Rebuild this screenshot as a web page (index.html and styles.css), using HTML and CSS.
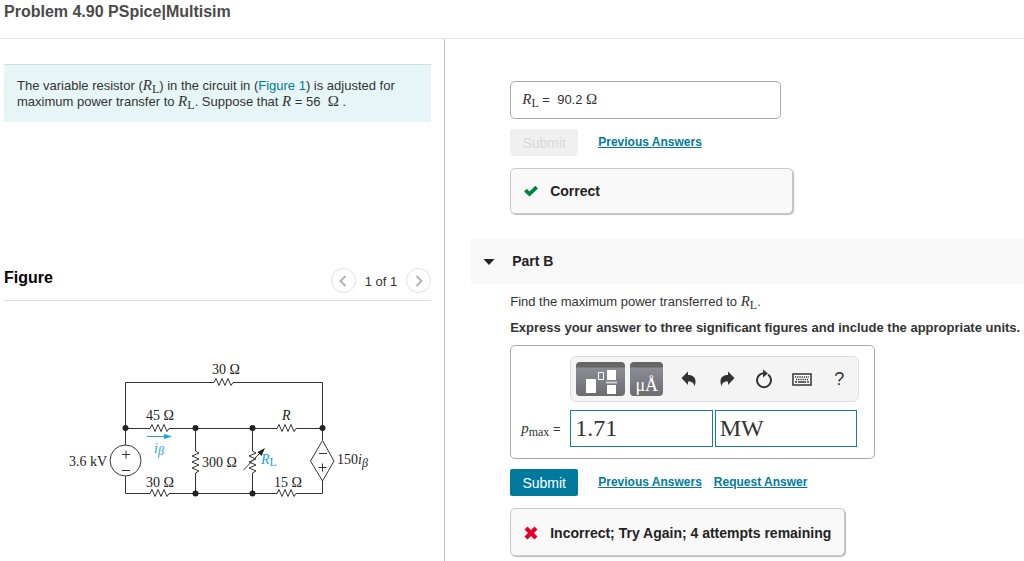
FILE: index.html
```html
<!DOCTYPE html>
<html lang="en">
<head>
  <meta charset="UTF-8">
  <meta name="viewport" content="width=device-width, initial-scale=1.0">
  <title>Problem 4.90 PSpice|Multisim</title>
  <link rel="stylesheet" href="styles.css">
</head>
<body>

  <header class="page-header">
    <h1 class="page-title">Problem 4.90 PSpice|Multisim</h1>
  </header>

  <main class="columns">
    <section class="problem">
      <p class="intro">The variable resistor (<span class="math"><i>R</i><sub>L</sub></span>) in the circuit in (<a href="#figure" class="figure-link">Figure 1</a>) is adjusted for maximum power transfer to <span class="math"><i>R</i><sub>L</sub></span>. Suppose that <span class="math"><i>R</i></span> = 56 &nbsp;<span class="math">Ω</span> .</p>

      <div class="figure-header" id="figure">
        <h2 class="figure-title">Figure</h2>
        <div class="pager">
          <button class="pager-button" aria-label="Previous figure">
            <svg width="8" height="12" viewBox="0 0 8 12"><path d="M6.500 1L1.500 6l5 5"/></svg>
          </button>
          <span class="pager-text">1 of 1</span>
          <button class="pager-button" aria-label="Next figure">
            <svg width="8" height="12" viewBox="0 0 8 12"><path d="M1.500 1l5 5-5 5"/></svg>
          </button>
        </div>
      </div>

      <svg class="circuit" width="310" height="140" viewBox="65 360 310 140">
        <!-- wires -->
        <g class="wire">
          <path d="M125.500 445V382.500H214l2 -4 3 7 3 -7 3 7 3 -7 3 7 2 -3H322.500V440"/>
          <path d="M125.500 428.500H150l2 -4 3 7 3 -7 3 7 3 -7 3 7 2 -3H277l2 -4 3 7 3 -7 3 7 3 -7 3 7 2 -3H322"/>
          <path d="M125.500 476V493.500H150l2 -4 3 7 3 -7 3 7 3 -7 3 7 2 -3H277l2 -4 3 7 3 -7 3 7 3 -7 3 7 2 -3H322.500V481"/>
          <path d="M195.500 428V451l3.500 2 -7 3 7 3 -7 3 7 3 -7 3 7 3 -3.500 2V494"/>
          <path d="M252.500 428V451l3.500 2 -7 3 7 3 -7 3 7 3 -7 3 7 3 -3.500 2V494"/>
          <circle cx="125.500" cy="460.500" r="15.500"/>
          <path d="M322.500 440.500L334 461l-11.500 20L310.500 461z"/>
          <path d="M122 454.500h8M126 450.500v8M122 470.500h8M319 453.500h8M318.500 467.500h8M322.500 463.500v8"/>
          <path d="M243.500 470L260 453"/>
        </g>
        <path class="ink" d="M265 448l-3.500 8-4-4z"/>
        <g class="ink">
          <circle cx="125.500" cy="428" r="3"/>
          <circle cx="195.500" cy="428" r="3"/>
          <circle cx="252.500" cy="428" r="3"/>
          <circle cx="322.500" cy="428" r="3"/>
          <circle cx="195.500" cy="493.500" r="3"/>
          <circle cx="252.500" cy="493.500" r="3"/>
        </g>
        <!-- current direction -->
        <path class="current" d="M147 436h17v-2l8 2.500-8 2.500v-2h-17z"/>
        <!-- labels -->
        <g class="label">
          <text x="212" y="374">30 Ω</text>
          <text x="146" y="420">45 Ω</text>
          <text x="146" y="487">30 Ω</text>
          <text x="274" y="487">15 Ω</text>
          <text x="202" y="467">300 Ω</text>
          <text x="69" y="466">3.6 kV</text>
          <text x="282" y="420" class="var">R</text>
          <text x="337" y="464">150<tspan class="var">i</tspan><tspan class="var small" dy="3">β</tspan></text>
          <text x="154" y="453" class="blue var">i<tspan class="small" dy="2">β</tspan></text>
          <text x="261" y="464" class="blue"><tspan class="var">R</tspan><tspan class="small" dy="2">L</tspan></text>
        </g>
      </svg>
    </section>

    <section class="answers">
      <div class="part-body">
        <div class="given-answer"><span class="math"><i>R</i><sub>L</sub></span> = &nbsp;90.2 <span class="math">Ω</span></div>
        <div class="actions">
          <button class="submit-button" disabled>Submit</button>
          <a href="#" class="action-link">Previous Answers</a>
        </div>
        <div class="feedback feedback-correct">
          <svg width="14" height="12" viewBox="0 0 14 12"><path d="M0 6.500L2.800 3.800 5.500 6.500 11.300 0.700 14 3.400 5.500 11.500z" fill="#00843d"/></svg>
          <span>Correct</span>
        </div>
      </div>

      <button class="part-header" aria-expanded="true">
        <svg width="12" height="6" viewBox="0 0 12 6"><path d="M0.500 0h11L6 6z" fill="#222"/></svg>
        <span>Part B</span>
      </button>

      <div class="part-body">
        <p class="question">Find the maximum power transferred to <span class="math"><i>R</i><sub>L</sub></span>.</p>
        <p class="instruction">Express your answer to three significant figures and include the appropriate units.</p>

        <div class="answer-box">
          <div class="toolbar">
            <button class="template-button" aria-label="Templates">
              <svg width="32" height="26" viewBox="0 0 32 26">
                <g fill="#fff">
                  <path d="M1 10h10v14H1zM22 1h9v10h-9zM22 16h9v9h-9z"/>
                  <path d="M21 12.500h11v2H21z" fill="#d2d2d6"/>
                </g>
                <path d="M13.500 3.500h5v7h-5z" fill="none" stroke="#fff"/>
              </svg>
            </button>
            <button class="units-button" aria-label="Symbols">μÅ</button>
            <button class="tool-button" aria-label="Undo">
              <svg width="16" height="16" viewBox="0 0 16 16"><path d="M7 0.500v3.500c5 0 7.500 2.500 7.500 6.500 0 2-.5 3.500-1.500 5 .3-3.500-1.500-5-6-5v3.500L0.500 7z"/></svg>
            </button>
            <button class="tool-button" aria-label="Redo">
              <svg width="16" height="16" viewBox="0 0 16 16"><path d="M9 0.500v3.500c-5 0-7.500 2.500-7.500 6.500 0 2 .5 3.500 1.500 5-.3-3.500 1.500-5 6-5v3.500L15.500 7z"/></svg>
            </button>
            <button class="tool-button" aria-label="Reset">
              <svg width="18" height="20" viewBox="0 0 18 20"><path d="M13.200 5.600A7 7 0 1 1 4.800 5.600M4.800 5.600Q6.500 4.300 9 4.300" fill="none" stroke="#333" stroke-width="2"/><path d="M8 0.500l5 4-5 4z"/></svg>
            </button>
            <button class="tool-button" aria-label="Keyboard">
              <svg width="20" height="13" viewBox="0 0 20 13"><path d="M1 1h18v11H1z" fill="#fff" stroke="#333" stroke-width="1.500"/><path d="M3 4h14M4 6.500h12" fill="none" stroke="#333" stroke-width="1.300" stroke-dasharray="1.300 .9"/><path d="M3 9h2M6 9h8M15 9h2" stroke="#333" stroke-width="1.300"/></svg>
            </button>
            <button class="tool-button help" aria-label="Help">?</button>
          </div>
          <label for="value" class="answer-label"><span class="math"><i>p</i><sub>max</sub></span> =</label>
          <div class="answer-inputs">
            <input type="text" id="value" class="answer-input" value="1.71">
            <input type="text" id="units" class="answer-input" value="MW" aria-label="Units">
          </div>
        </div>

        <div class="actions">
          <button class="submit-button">Submit</button>
          <a href="#" class="action-link">Previous Answers</a>
          <a href="#" class="action-link">Request Answer</a>
        </div>
        <div class="feedback feedback-incorrect">
          <svg width="14" height="14" viewBox="0 0 14 14"><path d="M3.500 0.500L7 4 10.500 0.500 13.500 3.500 10 7 13.500 10.500 10.500 13.500 7 10 3.500 13.500 0.500 10.500 4 7 0.500 3.500z" fill="#e0002a"/></svg>
          <span>Incorrect; Try Again; 4 attempts remaining</span>
        </div>
      </div>
    </section>
  </main>

</body>
</html>
```
FILE: styles.css
```css
* {
  box-sizing: border-box;
}

body {
  margin: 0;
  min-height: 100vh;
  display: flex;
  flex-direction: column;
  background: #fff;
  color: #333;
  font-family: "Liberation Sans", Arial, sans-serif;
  font-size: 13px;
  line-height: 16px;
}

h1, h2, p {
  margin: 0;
}

button, input {
  font-family: inherit;
  cursor: pointer;
}

svg {
  flex: none;
}

.math {
  font-family: "Liberation Serif", "Times New Roman", serif;
  font-size: 15px;
  line-height: 1px;
}

.math sub {
  font-size: 12px;
  line-height: 1px;
  vertical-align: -3px;
}

.page-header {
  padding: 2px 4px 16px;
  border-bottom: 1px solid #e3e3e3;
}

.page-title {
  font-size: 16px;
  line-height: 20px;
  color: #4a4a4a;
}

.columns {
  flex: 1;
  display: grid;
  grid-template-columns: 10fr 13fr;
}

/* left column */
.problem {
  padding: 25px 13px 0 4px;
  border-right: 1px solid #b4c2d3;
}

.intro {
  padding: 13px 13px 12px;
  background: #e6f6f6;
  border-top: 1px solid #d5dcdf;
}

.figure-link {
  color: #007a9c;
  text-decoration: none;
}

.figure-header {
  display: flex;
  justify-content: space-between;
  margin-top: 146px;
  padding-bottom: 7px;
  border-bottom: 1px solid #e0e0e0;
}

.figure-title {
  font-size: 16px;
  line-height: 20px;
  color: #000;
}

.pager {
  display: flex;
  align-items: center;
  gap: 9px;
}

.pager-text {
  font-size: 13px;
  padding-top: 3px;
}

.pager-button {
  width: 25px;
  height: 25px;
  padding: 0;
  display: flex;
  align-items: center;
  justify-content: center;
  background: #fff;
  border: 1px solid #e0e0e0;
  border-radius: 50%;
}

.pager-button path {
  fill: none;
  stroke: #b5b5b5;
  stroke-width: 2;
}

.circuit {
  display: block;
  margin: 59px 0 0 61px;
}

.wire {
  fill: none;
  stroke: #333;
  stroke-width: 1;
}

.ink {
  fill: #222;
}

.current, .label .blue {
  fill: #1ba3dc;
}

.label {
  font-family: "Liberation Serif", "Times New Roman", serif;
  font-size: 14px;
  fill: #222;
}

.label .var {
  font-style: italic;
}

.label .small {
  font-size: 12px;
}

/* right column */
.answers {
  padding: 42px 0 5px 26px;
}

.part-body {
  padding-left: 39px;
}

.given-answer {
  width: 271px;
  padding: 10px 11px;
  border: 1px solid #aaa;
  border-radius: 5px;
}

.actions {
  display: flex;
  align-items: center;
  gap: 12px;
  margin: 10px 0 12px;
}

.submit-button {
  width: 68px;
  height: 27px;
  margin-right: 8px;
  padding: 0;
  font-size: 14px;
  color: #fff;
  background: #007a9c;
  border: none;
  border-radius: 2px;
}

.submit-button:disabled {
  color: #d8d8d8;
  background: #f0f0f0;
}

.action-link {
  font-size: 12px;
  line-height: 14px;
  padding-bottom: 2px;
  font-weight: bold;
  color: #007a9c;
}

.feedback {
  display: flex;
  align-items: center;
  gap: 12px;
  width: fit-content;
  padding: 14px 13px;
  font-size: 14px;
  font-weight: bold;
  color: #222;
  background: #f9f9f9;
  border: 1px solid #c8c8c8;
  border-radius: 5px;
  box-shadow: 1px 1px 1px #bbb;
}

.feedback-correct {
  width: 283px;
}

.feedback-incorrect {
  padding: 16px 13px 14px;
}

.part-header {
  width: 100%;
  margin: 25px 0 10px;
  padding: 14px 12px;
  display: flex;
  align-items: center;
  gap: 17px;
  font-size: 14px;
  line-height: 17px;
  font-weight: bold;
  color: #222;
  background: #f8f8f8;
  border: none;
}

.instruction {
  margin-top: 10px;
  font-weight: bold;
}

.answer-box {
  display: grid;
  grid-template-columns: 49px 1fr;
  row-gap: 8px;
  align-items: center;
  width: 365px;
  margin-top: 9px;
  padding: 10px 15px 11px 10px;
  border: 1px solid #aaa;
  border-radius: 5px;
}

.toolbar {
  grid-column: 2;
  display: flex;
  align-items: center;
  height: 46px;
  padding: 0 0 0 5px;
  background: #f4f4f4;
  border: 1px solid #ddd;
  border-radius: 6px;
}

.template-button, .units-button {
  height: 34px;
  margin-right: 5px;
  padding: 5px 0 0;
  display: flex;
  align-items: center;
  justify-content: center;
  color: #fff;
  background: linear-gradient(#666 0, #666 5px, #8c8c96 6px, #6c6c70 100%);
  border: none;
  border-radius: 4px;
}

.template-button {
  width: 49px;
}

.units-button {
  width: 33px;
  margin-right: 7px;
  padding-top: 12px;
  font-family: "Liberation Serif", "Times New Roman", serif;
  font-size: 18px;
}

.tool-button {
  flex: 1;
  height: 34px;
  padding: 0;
  display: flex;
  align-items: center;
  justify-content: center;
  color: #333;
  background: none;
  border: none;
}

.tool-button svg {
  fill: #333;
}

.help {
  font-size: 18px;
}

.answer-label {
  font-size: 13px;
}

.answer-inputs {
  display: grid;
  grid-template-columns: 1fr 1fr;
  gap: 2px;
  padding-right: 2px;
}

.answer-input {
  width: 100%;
  height: 37px;
  padding: 0 4px;
  font-family: "Liberation Serif", "Times New Roman", serif;
  font-size: 24px;
  color: #333;
  border: 1px solid #187c9c;
  cursor: text;
}
```
